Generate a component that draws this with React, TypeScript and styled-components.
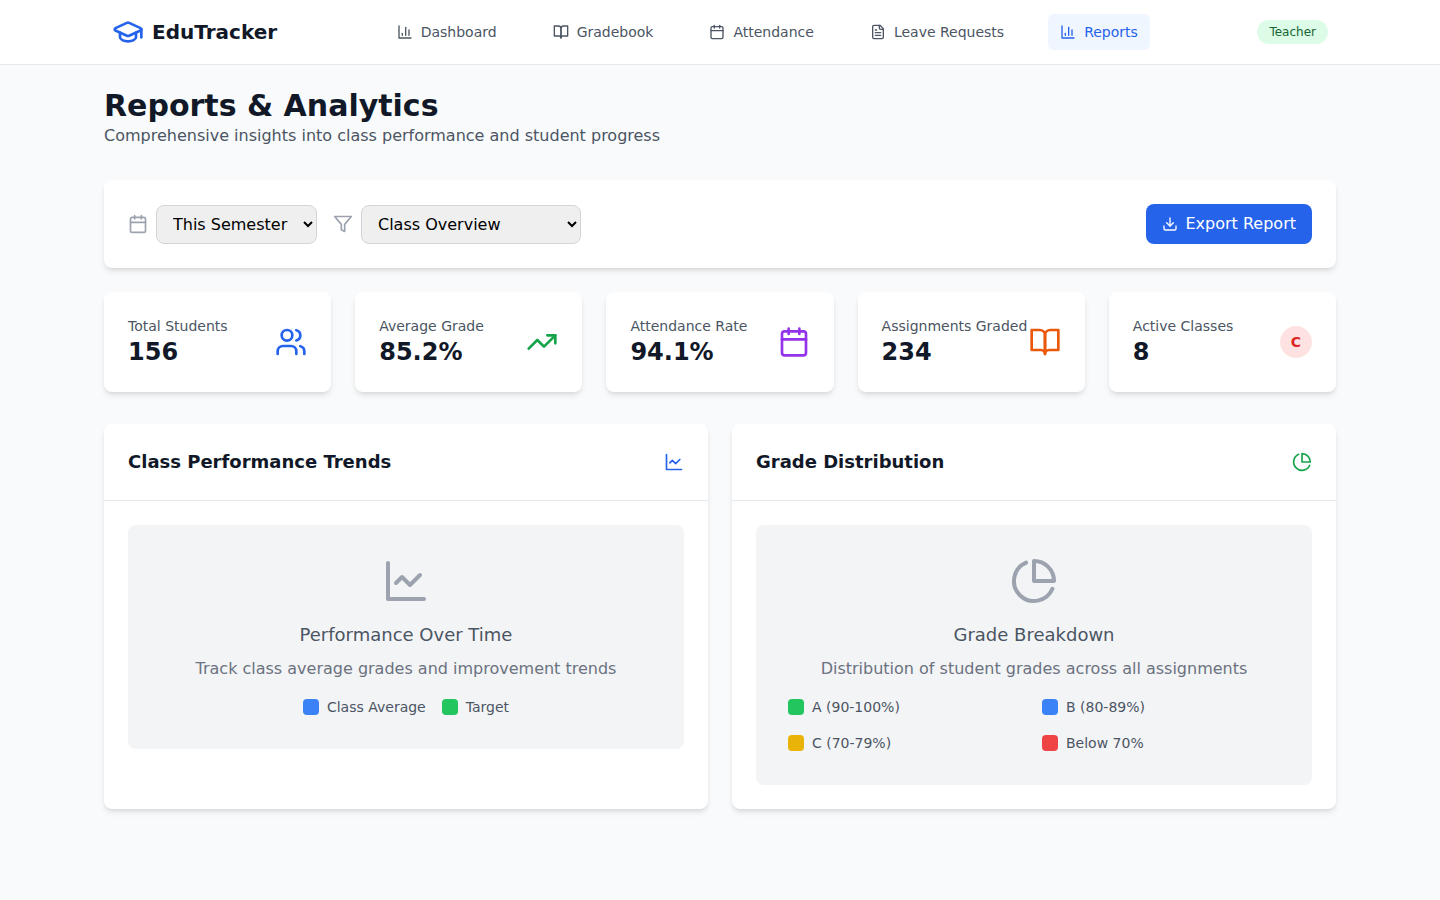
import React from "react";
import styled, { createGlobalStyle } from "styled-components";
import { Calendar, Download, GraduationCap, TrendingUp, Users } from "lucide-react";

const GlobalStyle = createGlobalStyle`
  *, *::before, *::after { box-sizing: border-box; }
  body {
    margin: 0;
    background: #f9fafb;
    color: #111827;
    font-family: "DejaVu Sans", sans-serif;
    font-size: 16px;
    line-height: 24px;
  }
  h1, h2, h3, p, ul { margin: 0; padding: 0; }
  ul { list-style: none; }
  svg { display: block; flex-shrink: 0; }
`;

type IconProps = { size?: number };

const StrokeIcon = styled.svg.attrs({
  viewBox: "0 0 24 24",
  fill: "none",
  stroke: "currentColor",
  strokeWidth: 2,
  strokeLinecap: "round",
  strokeLinejoin: "round",
  "aria-hidden": true,
})``;

const BarChartIcon = ({ size = 16 }: IconProps) => (
  <StrokeIcon width={size} height={size}>
    <path d="M3 3v18h18" />
    <path d="M18 17V9" />
    <path d="M13 17V5" />
    <path d="M8 17v-3" />
  </StrokeIcon>
);

const LineChartIcon = ({ size = 16 }: IconProps) => (
  <StrokeIcon width={size} height={size}>
    <path d="M3 3v18h18" />
    <path d="m19 9-5 5-4-4-3 3" />
  </StrokeIcon>
);

const PieChartIcon = ({ size = 16 }: IconProps) => (
  <StrokeIcon width={size} height={size}>
    <path d="M21.21 15.89A10 10 0 1 1 8 2.83" />
    <path d="M22 12A10 10 0 0 0 12 2v10z" />
  </StrokeIcon>
);

const BookIcon = ({ size = 16 }: IconProps) => (
  <StrokeIcon width={size} height={size}>
    <path d="M2 3h6a4 4 0 0 1 4 4v14a3 3 0 0 0-3-3H2z" />
    <path d="M22 3h-6a4 4 0 0 0-4 4v14a3 3 0 0 1 3-3h7z" />
  </StrokeIcon>
);

const FileIcon = ({ size = 16 }: IconProps) => (
  <StrokeIcon width={size} height={size}>
    <path d="M15 2H6a2 2 0 0 0-2 2v16a2 2 0 0 0 2 2h12a2 2 0 0 0 2-2V7Z" />
    <path d="M14 2v4a2 2 0 0 0 2 2h4" />
    <path d="M10 9H8" />
    <path d="M16 13H8" />
    <path d="M16 17H8" />
  </StrokeIcon>
);

const FilterIcon = ({ size = 16 }: IconProps) => (
  <StrokeIcon width={size} height={size}>
    <polygon points="22 3 2 3 10 12.46 10 19 14 21 14 12.46 22 3" />
  </StrokeIcon>
);

const Page = styled.div`
  min-height: 100vh;
`;

const Header = styled.header`
  background: #ffffff;
  box-shadow: 0 1px 0 #e5e7eb;
`;

const HeaderInner = styled.div`
  display: flex;
  align-items: center;
  justify-content: space-between;
  max-width: 1280px;
  min-height: 64px;
  margin: 0 auto;
  padding: 0 32px;
`;

const Brand = styled.a`
  display: flex;
  align-items: center;
  gap: 8px;
  color: #111827;
  font-size: 20px;
  font-weight: 700;
  line-height: 28px;
  text-decoration: none;

  svg { color: #2563eb; }
`;

const Nav = styled.nav`
  display: flex;
  flex-wrap: wrap;
  gap: 0 32px;
`;

const NavLink = styled.a<{ $active?: boolean }>`
  display: flex;
  align-items: center;
  gap: 8px;
  padding: 8px 12px;
  border-radius: 6px;
  background: ${(p) => (p.$active ? "#eff6ff" : "transparent")};
  color: ${(p) => (p.$active ? "#2563eb" : "#4b5563")};
  font-size: 14px;
  line-height: 20px;
  text-decoration: none;
`;

const RoleBadge = styled.span`
  padding: 4px 12px;
  border-radius: 12px;
  background: #dcfce7;
  color: #166534;
  font-size: 12px;
  line-height: 16px;
`;

const Main = styled.main`
  max-width: 1280px;
  margin: 0 auto;
  padding: 24px;
`;

const PageTitle = styled.h1`
  font-size: 30px;
  font-weight: 700;
  line-height: 36px;
`;

const Subtitle = styled.p`
  color: #4b5563;
`;

const Card = styled.section`
  border-radius: 8px;
  background: #ffffff;
  box-shadow: 0 4px 6px -1px rgba(0, 0, 0, 0.1), 0 2px 4px -2px rgba(0, 0, 0, 0.1);
`;

const Toolbar = styled(Card)`
  display: flex;
  flex-wrap: wrap;
  align-items: center;
  justify-content: space-between;
  gap: 16px;
  margin-top: 32px;
  padding: 24px;
`;

const Filters = styled.div`
  display: flex;
  flex-wrap: wrap;
  align-items: center;
  gap: 16px;
`;

const FilterField = styled.label`
  display: flex;
  align-items: center;
  gap: 8px;
  color: #9ca3af;
`;

const Select = styled.select<{ $width: number }>`
  width: ${(p) => p.$width}px;
  padding: 8px 12px;
  border: 1px solid #d1d5db;
  border-radius: 8px;
  background-color: #efefef;
  color: #000000;
  font-family: inherit;
  font-size: 16px;
`;

const ExportButton = styled.button`
  display: flex;
  align-items: center;
  gap: 8px;
  padding: 8px 16px;
  border: 0;
  border-radius: 8px;
  background: #2563eb;
  color: #ffffff;
  font-family: inherit;
  font-size: 16px;
  line-height: 24px;
  cursor: pointer;
`;

const StatGrid = styled.div`
  display: grid;
  grid-template-columns: repeat(5, 1fr);
  gap: 24px;
  margin-top: 24px;

  @media (max-width: 1100px) { grid-template-columns: repeat(2, 1fr); }
`;

const StatCard = styled(Card)`
  display: flex;
  align-items: center;
  justify-content: space-between;
  padding: 24px;
`;

const StatLabel = styled.p`
  color: #4b5563;
  font-size: 14px;
  line-height: 20px;
`;

const StatValue = styled.p`
  font-size: 24px;
  font-weight: 700;
  line-height: 32px;
`;

const StatIcon = styled.div<{ $color: string }>`
  color: ${(p) => p.$color};
`;

const ClassBadge = styled.span`
  display: flex;
  align-items: center;
  justify-content: center;
  width: 32px;
  height: 32px;
  border-radius: 50%;
  background: #fee2e2;
  font-size: 14px;
  font-weight: 700;
  line-height: 20px;
`;

const ChartGrid = styled.div`
  display: grid;
  grid-template-columns: repeat(2, 1fr);
  gap: 24px;
  margin-top: 32px;

  @media (max-width: 1000px) { grid-template-columns: 1fr; }
`;

const CardHeader = styled.div<{ $iconColor: string }>`
  display: flex;
  align-items: center;
  justify-content: space-between;
  padding: 24px;
  border-bottom: 1px solid #e5e7eb;

  svg { color: ${(p) => p.$iconColor}; }
`;

const CardTitle = styled.h2`
  font-size: 18px;
  font-weight: 600;
  line-height: 28px;
`;

const CardBody = styled.div`
  padding: 24px;
`;

const Placeholder = styled.div`
  display: flex;
  flex-direction: column;
  align-items: center;
  padding: 32px;
  border-radius: 8px;
  background: #f3f4f6;
  text-align: center;

  & > svg { color: #9ca3af; }
`;

const PlaceholderTitle = styled.h3`
  margin-top: 16px;
  color: #4b5563;
  font-size: 18px;
  font-weight: 400;
  line-height: 28px;
`;

const PlaceholderText = styled.p`
  margin-top: 8px;
  color: #6b7280;
`;

const LegendRow = styled.ul`
  display: flex;
  flex-wrap: wrap;
  justify-content: center;
  gap: 16px;
  margin-top: 16px;
`;

const LegendGrid = styled.ul`
  display: grid;
  grid-template-columns: repeat(2, 1fr);
  gap: 16px;
  width: 100%;
  margin-top: 16px;
`;

const LegendItem = styled.li<{ $color: string }>`
  display: flex;
  align-items: center;
  gap: 8px;
  color: #4b5563;
  font-size: 14px;
  line-height: 20px;

  &::before {
    content: "";
    width: 16px;
    height: 16px;
    border-radius: 4px;
    background: ${(p) => p.$color};
  }
`;

const navItems = [
  { label: "Dashboard", icon: <BarChartIcon /> },
  { label: "Gradebook", icon: <BookIcon /> },
  { label: "Attendance", icon: <Calendar size={16} /> },
  { label: "Leave Requests", icon: <FileIcon /> },
  { label: "Reports", icon: <BarChartIcon />, active: true },
];

const stats = [
  { label: "Total Students", value: "156", color: "#2563eb", icon: <Users size={32} /> },
  { label: "Average Grade", value: "85.2%", color: "#16a34a", icon: <TrendingUp size={32} /> },
  { label: "Attendance Rate", value: "94.1%", color: "#9333ea", icon: <Calendar size={32} /> },
  { label: "Assignments Graded", value: "234", color: "#ea580c", icon: <BookIcon size={32} /> },
  { label: "Active Classes", value: "8", color: "#dc2626", icon: <ClassBadge>C</ClassBadge> },
];

const trendLegend = [
  { label: "Class Average", color: "#3b82f6" },
  { label: "Target", color: "#22c55e" },
];

const gradeLegend = [
  { label: "A (90-100%)", color: "#22c55e" },
  { label: "B (80-89%)", color: "#3b82f6" },
  { label: "C (70-79%)", color: "#eab308" },
  { label: "Below 70%", color: "#ef4444" },
];

export default function App() {
  return (
    <Page>
      <GlobalStyle />
      <Header>
        <HeaderInner>
          <Brand href="#">
            <GraduationCap size={32} />
            EduTracker
          </Brand>
          <Nav>
            {navItems.map((item) => (
              <NavLink
                key={item.label}
                href="#"
                $active={item.active}
                aria-current={item.active ? "page" : undefined}
              >
                {item.icon}
                {item.label}
              </NavLink>
            ))}
          </Nav>
          <RoleBadge>Teacher</RoleBadge>
        </HeaderInner>
      </Header>

      <Main>
        <PageTitle>Reports &amp; Analytics</PageTitle>
        <Subtitle>Comprehensive insights into class performance and student progress</Subtitle>

        <Toolbar>
          <Filters>
            <FilterField>
              <Calendar size={20} />
              <Select $width={161} aria-label="Period" defaultValue="semester">
                <option value="semester">This Semester</option>
                <option value="month">This Month</option>
                <option value="year">This Year</option>
              </Select>
            </FilterField>
            <FilterField>
              <FilterIcon size={20} />
              <Select $width={220} aria-label="Report type" defaultValue="overview">
                <option value="overview">Class Overview</option>
                <option value="student">Student Progress</option>
                <option value="attendance">Attendance</option>
              </Select>
            </FilterField>
          </Filters>
          <ExportButton type="button">
            <Download size={16} />
            Export Report
          </ExportButton>
        </Toolbar>

        <StatGrid>
          {stats.map((stat) => (
            <StatCard key={stat.label}>
              <div>
                <StatLabel>{stat.label}</StatLabel>
                <StatValue>{stat.value}</StatValue>
              </div>
              <StatIcon $color={stat.color}>{stat.icon}</StatIcon>
            </StatCard>
          ))}
        </StatGrid>

        <ChartGrid>
          <Card>
            <CardHeader $iconColor="#2563eb">
              <CardTitle>Class Performance Trends</CardTitle>
              <LineChartIcon size={20} />
            </CardHeader>
            <CardBody>
              <Placeholder>
                <LineChartIcon size={48} />
                <PlaceholderTitle>Performance Over Time</PlaceholderTitle>
                <PlaceholderText>Track class average grades and improvement trends</PlaceholderText>
                <LegendRow>
                  {trendLegend.map((entry) => (
                    <LegendItem key={entry.label} $color={entry.color}>{entry.label}</LegendItem>
                  ))}
                </LegendRow>
              </Placeholder>
            </CardBody>
          </Card>

          <Card>
            <CardHeader $iconColor="#16a34a">
              <CardTitle>Grade Distribution</CardTitle>
              <PieChartIcon size={20} />
            </CardHeader>
            <CardBody>
              <Placeholder>
                <PieChartIcon size={48} />
                <PlaceholderTitle>Grade Breakdown</PlaceholderTitle>
                <PlaceholderText>Distribution of student grades across all assignments</PlaceholderText>
                <LegendGrid>
                  {gradeLegend.map((entry) => (
                    <LegendItem key={entry.label} $color={entry.color}>{entry.label}</LegendItem>
                  ))}
                </LegendGrid>
              </Placeholder>
            </CardBody>
          </Card>
        </ChartGrid>
      </Main>
    </Page>
  );
}
